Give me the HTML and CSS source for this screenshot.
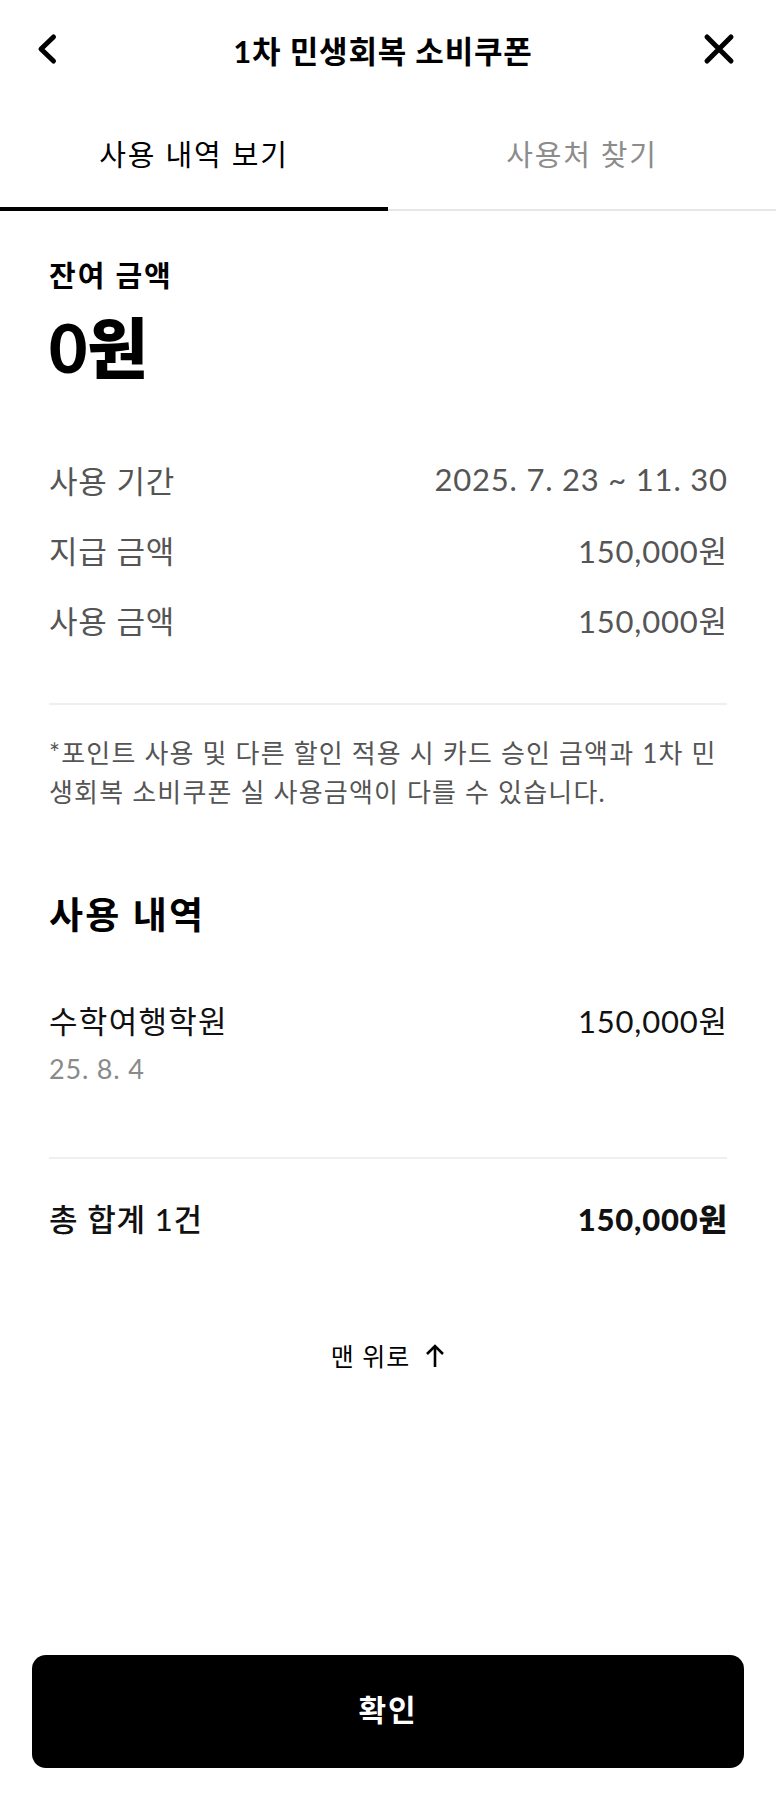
FILE: index.html
```html
<!DOCTYPE html>
<html lang="ko">

<head>
    <meta charset="UTF-8">
    <meta name="viewport" content="width=device-width, initial-scale=1.0">
    <title>1차 민생회복 소비쿠폰</title>
    <link rel="stylesheet" href="styles.css">
</head>

<body>
    <header class="topbar">
        <button class="iconBtn back" aria-label="뒤로">
            <svg width="28" height="34" viewBox="0 0 28 34">
                <path d="M20.5 5 L8 17 L20.5 29" fill="none" stroke="#000" stroke-width="5" stroke-linecap="round" stroke-linejoin="round" />
            </svg>
        </button>
        <h1 class="title">1차 민생회복 소비쿠폰</h1>
        <button class="iconBtn close" aria-label="닫기">
            <svg width="34" height="34" viewBox="0 0 34 34">
                <path d="M5 5 L29 29 M29 5 L5 29" fill="none" stroke="#000" stroke-width="5" stroke-linecap="round" />
            </svg>
        </button>
    </header>

    <nav class="tabs">
        <a class="tab active">사용 내역 보기</a>
        <a class="tab">사용처 찾기</a>
    </nav>

    <main class="content">
        <section class="balance">
            <p class="balanceLabel">잔여 금액</p>
            <p class="balanceAmount">0원</p>
        </section>

        <dl class="info">
            <div class="infoRow">
                <dt>사용 기간</dt>
                <dd>2025. 7. 23 ~ 11. 30</dd>
            </div>
            <div class="infoRow">
                <dt>지급 금액</dt>
                <dd>150,000원</dd>
            </div>
            <div class="infoRow">
                <dt>사용 금액</dt>
                <dd>150,000원</dd>
            </div>
        </dl>

        <p class="note">*포인트 사용 및 다른 할인 적용 시 카드 승인 금액과 1차 민생회복 소비쿠폰 실 사용금액이 다를 수 있습니다.</p>

        <h2 class="sectionTitle">사용 내역</h2>

        <ul class="history">
            <li class="historyItem">
                <div class="historyRow">
                    <span class="store">수학여행학원</span>
                    <span class="price">150,000원</span>
                </div>
                <span class="date">25. 8. 4</span>
            </li>
        </ul>

        <div class="total">
            <span>총 합계 1건</span>
            <strong>150,000원</strong>
        </div>

        <a class="toTop">맨 위로 <span class="arrow">
                <svg width="20" height="24" viewBox="0 0 20 24">
                    <path d="M10 23 V2 M2 10 L10 2 L18 10" fill="none" stroke="#000" stroke-width="2.6" stroke-linejoin="miter" />
                </svg>
            </span></a>
    </main>

    <footer class="bottom">
        <button class="confirm">확인</button>
    </footer>
</body>

</html>
```

FILE: styles.css
```css
* {
    box-sizing: border-box;
}

html,
body {
    margin: 0;
    padding: 0;
}

body {
    min-height: 100vh;
    display: flex;
    flex-direction: column;
    background-color: #fff;
    color: #000;
    font-family: Lato, "Noto Sans CJK KR", sans-serif;
}

p,
h1,
h2,
dl,
dd,
ul {
    margin: 0;
    padding: 0;
}

/* 상단 바 */
.topbar {
    height: 98px;
    display: flex;
    align-items: center;
    justify-content: space-between;
    padding: 0 40px 0 30px;
}

.iconBtn {
    background: none;
    border: 0;
    padding: 0;
    width: 34px;
    height: 34px;
    display: flex;
    align-items: center;
    justify-content: center;
}

.title {
    font-size: 31px;
    font-weight: 700;
    letter-spacing: 0.8px;
}

/* 탭 */
.tabs {
    display: flex;
    border-bottom: 2px solid #e6e6e6;
}

.tab {
    flex: 1;
    height: 113px;
    display: flex;
    align-items: center;
    justify-content: center;
    font-size: 29px;
    letter-spacing: 1.8px;
    color: #8c8c8c;
    margin-bottom: -2px;
    border-bottom: 4px solid transparent;
}

.tab.active {
    color: #000;
    border-bottom-color: #000;
}

.content {
    flex: 1;
    padding: 0 49px;
}

/* 잔여 금액 */
.balance {
    padding-top: 48px;
}

.balanceLabel {
    font-size: 29px;
    font-weight: 700;
    line-height: 34px;
    letter-spacing: 2px;
}

.balanceAmount {
    margin-top: 22px;
    font-size: 66px;
    font-weight: 900;
    line-height: 66px;
}

.info {
    margin-top: 63px;
    border-bottom: 2px solid #efefef;
    padding-bottom: 49px;
}

.infoRow {
    display: flex;
    justify-content: space-between;
    height: 70px;
    align-items: center;
    font-size: 31px;
    letter-spacing: 0.8px;
    color: #555;
}

.infoRow dd {
    margin-right: -0.8px;
}

.note {
    margin-top: 29px;
    font-size: 26px;
    line-height: 39px;
    letter-spacing: 1.2px;
    color: #555;
}

.sectionTitle {
    margin-top: 80px;
    font-size: 37px;
    font-weight: 700;
    line-height: 46px;
    letter-spacing: 2.2px;
}

/* 사용 내역 */
.history {
    list-style: none;
    margin-top: 63px;
    border-bottom: 2px solid #efefef;
    padding-bottom: 70px;
}

.historyRow {
    display: flex;
    justify-content: space-between;
    font-size: 31px;
    line-height: 40px;
    color: #111;
}

.store {
    letter-spacing: 1.3px;
}

.price {
    letter-spacing: 0.8px;
    margin-right: -0.8px;
}

.date {
    display: block;
    margin-top: 10px;
    font-size: 27px;
    line-height: 36px;
    letter-spacing: 0.8px;
    color: #8a8a8a;
}

.total {
    margin-top: 40px;
    display: flex;
    justify-content: space-between;
    font-size: 31px;
    line-height: 40px;
    color: #111;
}

.total span {
    font-weight: 500;
    letter-spacing: 0.9px;
}

.total strong {
    font-weight: 900;
    letter-spacing: 0.8px;
    margin-right: -0.8px;
}

.toTop {
    margin-top: 99px;
    display: flex;
    justify-content: center;
    align-items: center;
    gap: 15px;
    font-size: 25px;
    line-height: 36px;
    letter-spacing: 1px;
}

.arrow {
    display: flex;
}

/* 확인 버튼 */
.bottom {
    padding: 0 32px 32px;
}

.confirm {
    width: 100%;
    height: 113px;
    border: 0;
    border-radius: 14px;
    padding-bottom: 8px;
    background-color: #000;
    color: #fff;
    font-family: Lato, "Noto Sans CJK KR", sans-serif;
    font-size: 30px;
    font-weight: 700;
    letter-spacing: 2px;
}
```
